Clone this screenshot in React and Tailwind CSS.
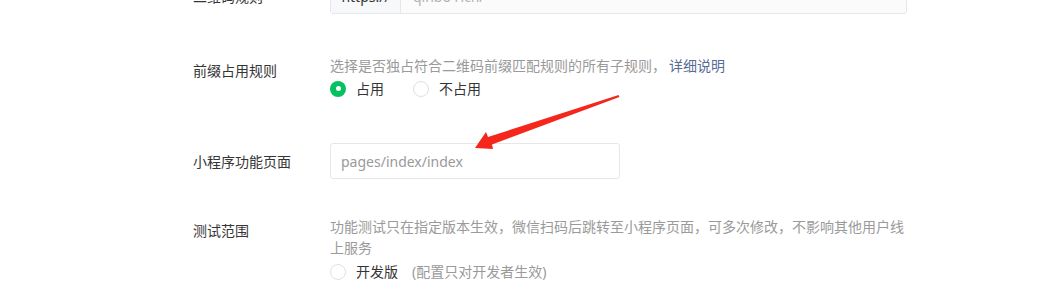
import React from "react";

const font = {
  fontFamily: '"Noto Sans", "Noto Sans CJK SC", sans-serif',
};

function Radio({ checked, label }) {
  return (
    <label className="flex items-center h-[21px]">
      {checked ? (
        <span className="w-[16px] h-[16px] rounded-full bg-[#07c160] flex items-center justify-center">
          <span className="w-[5px] h-[5px] rounded-full bg-white" />
        </span>
      ) : (
        <span className="w-[16px] h-[16px] rounded-full border border-[#e0e0e0] bg-white" />
      )}
      <span className="ml-[10px] text-[14px] text-[#353535]">{label}</span>
    </label>
  );
}

export default function App() {
  return (
    <div
      className="relative w-[1043px] h-[295px] overflow-hidden bg-white"
      style={font}
    >
      <div className="pl-[193px]">
        {/* 二维码规则 */}
        <div className="flex items-center mt-[-22px]">
          <div className="w-[137px] text-[14px] text-[#353535]">二维码规则</div>
          <div className="flex w-[577px] h-[36px] border border-[#e7e7eb] rounded-[3px] bg-[#fbfbfc] text-[14px]">
            <div className="w-[70px] flex items-center justify-center bg-[#f6f8f9] border-r border-[#e7e7eb] text-[#353535]">
              https://
            </div>
            <div className="flex items-center pl-[12px] text-[#b2b2b2]">
              qinbo rich/
            </div>
          </div>
        </div>

        {/* 前缀占用规则 */}
        <div className="flex items-start mt-[41px]">
          <div className="w-[137px] pt-[5px] text-[14px] leading-[21px] text-[#353535]">
            前缀占用规则
          </div>
          <div className="w-[578px]">
            <p className="text-[14px] leading-[21px] text-[#9a9a9a]">
              选择是否独占符合二维码前缀匹配规则的所有子规则，
              <a className="ml-[3px] text-[#576b95]">详细说明</a>
            </p>
            <div className="flex items-center gap-[29px] mt-[2px]">
              <Radio checked label="占用" />
              <Radio label="不占用" />
            </div>
          </div>
        </div>

        {/* 小程序功能页面 */}
        <div className="flex items-center mt-[44px]">
          <div className="w-[137px] text-[14px] text-[#353535]">小程序功能页面</div>
          <div className="w-[290px] h-[36px] border border-[#e7e7eb] rounded-[3px] flex items-center pl-[10px] text-[14px] text-[#9a9a9a]">
            pages/index/index
          </div>
        </div>

        {/* 测试范围 */}
        <div className="flex items-start mt-[37px]">
          <div className="w-[137px] pt-[4px] text-[14px] leading-[21px] text-[#353535]">
            测试范围
          </div>
          <div className="w-[578px]">
            <p className="text-[14px] leading-[21px] text-[#9a9a9a]">
              功能测试只在指定版本生效，微信扫码后跳转至小程序页面，可多次修改，不影响其他用户线上服务
            </p>
            <div className="flex items-center mt-[3px]">
              <Radio label="开发版" />
              <span className="ml-[14px] text-[14px] text-[#9a9a9a]">
                (配置只对开发者生效)
              </span>
            </div>
          </div>
        </div>
      </div>

      {/* annotation arrow */}
      <svg
        className="absolute inset-0 pointer-events-none"
        width="1043"
        height="295"
        viewBox="0 0 1043 295"
      >
        <polygon
          points="475,148 493,149 492,144.5 619.4,97 618.6,95 488,137 486,132"
          fill="#f5261c"
        />
      </svg>
    </div>
  );
}
